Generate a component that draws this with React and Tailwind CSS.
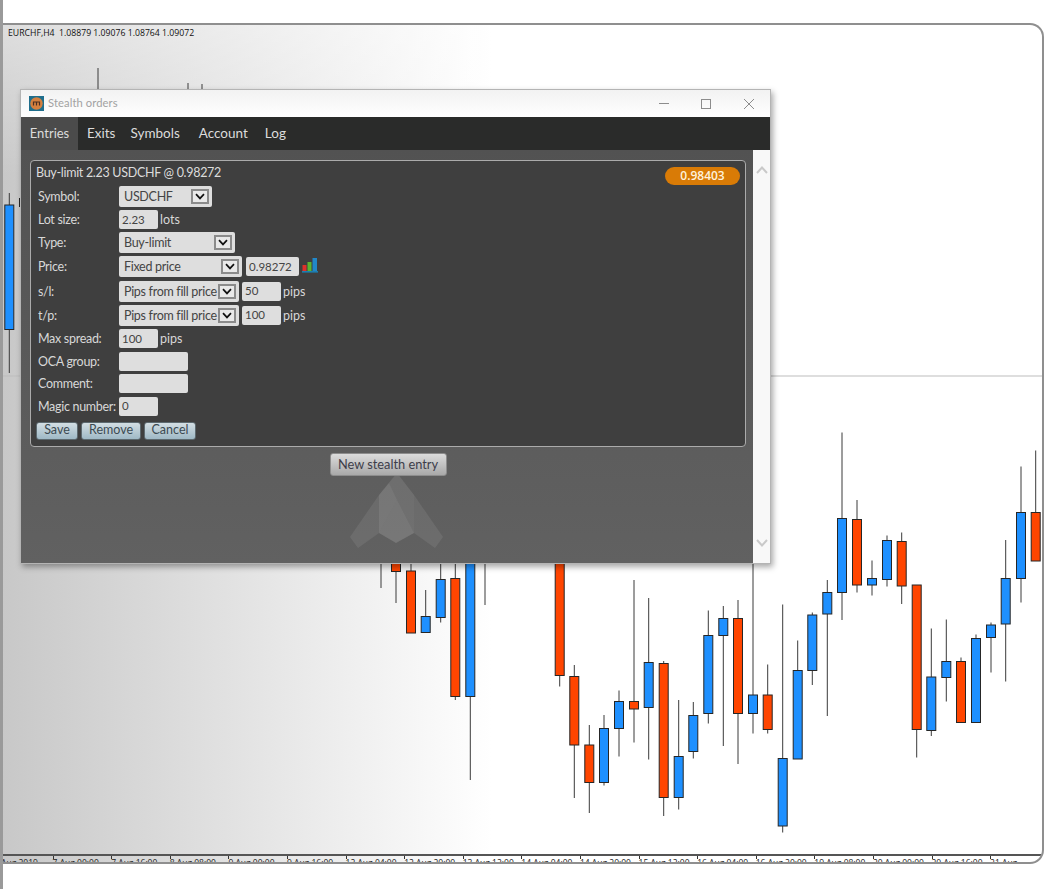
const CANDLES = [
  [396, 563, 603, 563, 571.5, "o"],
  [411, 563, 633, 571, 633, "o"],
  [425.7, 590, 633, 616.5, 632.5, "b"],
  [440.7, 563, 622.5, 579.5, 617.5, "b"],
  [455.3, 563, 700, 578.5, 696.5, "o"],
  [470.3, 563, 780, 563, 696.5, "b"],
  [559.7, 563, 686.5, 563, 675.5, "o"],
  [574.3, 665, 798, 676.5, 745, "o"],
  [589.3, 725, 813, 745, 782.5, "o"],
  [604, 715, 785.5, 728.5, 782.5, "b"],
  [619, 690.5, 756.5, 701.5, 728.5, "b"],
  [634, 580, 742.5, 701.5, 709, "o"],
  [648.7, 598, 759.5, 662.5, 707.5, "b"],
  [663.7, 661, 816, 663.5, 797.5, "o"],
  [678.7, 700, 809.5, 756.5, 797.5, "b"],
  [693.3, 702, 758.5, 715.5, 751.5, "b"],
  [708.3, 610.5, 723.5, 635.5, 713.5, "b"],
  [723.3, 606, 746, 618.5, 635.5, "b"],
  [738, 600, 764, 618.5, 713.5, "o"],
  [753, 563, 733.5, 695, 713.5, "b"],
  [767.7, 664.5, 733.5, 695, 729.5, "o"],
  [782.7, 604.5, 832.5, 758.5, 826, "b"],
  [797.7, 640.5, 759, 670.5, 759, "b"],
  [812.3, 612.5, 685, 615, 670.5, "b"],
  [827.3, 580, 716, 592.5, 614, "b"],
  [842, 432.5, 620, 518.5, 592.5, "b"],
  [857, 500, 592.5, 519.5, 585, "o"],
  [872, 560.5, 595.5, 578.5, 585, "b"],
  [887, 535.5, 586.5, 540.5, 579.5, "b"],
  [901.7, 532.5, 604, 541.5, 586, "o"],
  [916.7, 585, 757.5, 585, 729.5, "o"],
  [931.3, 628.5, 736, 677, 730.5, "b"],
  [946.3, 619.5, 701.5, 661.5, 677.5, "b"],
  [961, 657.5, 722.5, 661.5, 722.5, "o"],
  [976, 634.5, 722.5, 638.5, 722.5, "b"],
  [991, 622.5, 672.5, 625, 637.5, "b"],
  [1005.7, 540, 681.5, 578.5, 624, "b"],
  [1021, 466.5, 602.5, 512.5, 578.5, "b"],
  [1035.7, 450.5, 561, 512.5, 561, "o"],
  [9.3, 193, 373, 205, 329.5, "b"],
];

const WICKS = [
  [98, 68, 90],
  [188, 83, 90],
  [202, 84, 90],
  [381, 563, 588],
  [485, 563, 605],
];

const AXIS = [
  "6 Aug 2019", "7 Aug 00:00", "7 Aug 16:00", "8 Aug 08:00", "9 Aug 00:00", "9 Aug 16:00",
  "12 Aug 04:00", "12 Aug 20:00", "13 Aug 12:00", "14 Aug 04:00", "14 Aug 20:00",
  "15 Aug 12:00", "16 Aug 04:00", "16 Aug 20:00", "19 Aug 08:00", "20 Aug 00:00",
  "20 Aug 16:00", "21 Aug",
];

function Candles() {
  return (
    <svg className="absolute left-0 top-0 h-[830px] w-[1040px]" viewBox="3 25 1040 830">
      <line x1="3" y1="376" x2="1043" y2="376" stroke="#bdbdbd" strokeWidth="1" />
      {WICKS.map(([x, a, b]) => (
        <line key={x} x1={x} y1={a} x2={x} y2={b} stroke="#3a3a3a" strokeWidth="1" />
      ))}
      {CANDLES.map(([x, a, b, t, e, c]) => (
        <g key={x}>
          <line x1={x} y1={a} x2={x} y2={b} stroke="#3a3a3a" strokeWidth="1" />
          <rect
            x={x - 4.5}
            y={t}
            width="9"
            height={e - t}
            fill={c === "o" ? "#ff4500" : "#1e90ff"}
            stroke="#262626"
            strokeWidth="1"
          />
        </g>
      ))}
      <rect x="19.5" y="198.5" width="3" height="8" fill="#1e90ff" stroke="#262626" />
    </svg>
  );
}

function Chevron({ className = "" }) {
  return (
    <svg viewBox="0 0 10 7" className={"h-[7px] w-[10px] " + className}>
      <path d="M1 1.2 L5 5.4 L9 1.2" fill="none" stroke="#111" strokeWidth="1.7" />
    </svg>
  );
}

function Select({ w, children }) {
  return (
    <div className={`flex h-[21px] items-center justify-between rounded-[2px] bg-[#dedede] pl-[5px] pr-[3px] tracking-[-0.3px] text-[#444] ${w}`}>
      <span className="translate-y-px whitespace-nowrap">{children}</span>
      <span className="flex h-[15px] w-[18px] shrink-0 items-center justify-center border-2 border-[#8b8b8b] bg-[#e9e9e9]">
        <Chevron />
      </span>
    </div>
  );
}

function Input({ w, children }) {
  return (
    <div className={`flex h-[19px] items-center rounded-[2px] bg-[#dedede] pl-[3px] text-[11.5px] text-[#444] ${w}`}>
      {children}
    </div>
  );
}

function Row({ h, label, children }) {
  return (
    <div className={`flex items-center pl-[7px] ${h}`}>
      <span className="w-[81px] shrink-0 translate-y-px whitespace-nowrap tracking-[-0.3px] text-[#d8d8d8]">{label}</span>
      <div className="flex items-center">{children}</div>
    </div>
  );
}

function Btn({ w, children }) {
  return (
    <div className={`flex h-[18px] items-center justify-center rounded-[3px] border border-[#5d6a70] bg-gradient-to-b from-[#d3dee3] to-[#9fb9c6] text-[#3c4a52] ${w}`}>
      {children}
    </div>
  );
}

function BarsIcon() {
  return (
    <svg viewBox="0 0 16 16" className="ml-[3px] h-[16px] w-[16px] -translate-y-[2px]">
      <rect x="0.5" y="8" width="4" height="6" fill="#e0302a" />
      <rect x="5.5" y="5" width="4" height="9" fill="#5cb531" />
      <rect x="10.5" y="1" width="4.5" height="13" fill="#2188c9" />
      <rect x="0" y="14" width="16" height="1.6" fill="#1c7fb0" />
    </svg>
  );
}

function Logo() {
  return (
    <svg viewBox="340 465 110 90" className="h-[90px] w-[110px]">
      <polygon points="378,495 349,537 357,548 378,533" fill="#ffffff" fillOpacity="0.08" />
      <polygon points="413,495 442,537 434,548 413,533" fill="#ffffff" fillOpacity="0.08" />
      <polygon points="396,473 413,495 413,533 395,543 378,533 378,495" fill="#ffffff" fillOpacity="0.1" />
      <polygon points="378,495 388,483 396,500 378,533" fill="#ffffff" fillOpacity="0.06" />
      <polygon points="396,500 413,533 395,543 378,533" fill="#ffffff" fillOpacity="0.05" />
    </svg>
  );
}

function Dialog() {
  return (
    <div className="absolute left-[20px] top-[89px] flex h-[475px] w-[751px] flex-col border border-[#b4b4b4] bg-white font-['Lato','Open_Sans',sans-serif] text-[12.5px] shadow-[2px_3px_6px_rgba(0,0,0,0.35)]">
      <div className="flex h-[27px] shrink-0 items-center bg-gradient-to-b from-[#f2f2f2] to-white pl-[8px]">
        <svg viewBox="0 0 15 15" className="h-[15px] w-[15px]">
          <rect width="15" height="15" fill="#1f6e8c" />
          <circle cx="7.5" cy="7.5" r="6.2" fill="#d5803f" />
          <path d="M4.5 9.5 V6 H10.5 V9.5 M7.5 6 V9.5" fill="none" stroke="#4b2f22" strokeWidth="1.2" />
        </svg>
        <span className="ml-[4px] text-[11.2px] tracking-[0.1px] text-[#a2a2a2]">Stealth orders</span>
        <div className="ml-auto flex items-center pr-[16px]">
          <span className="h-px w-[10px] bg-[#8c8c8c]" />
          <span className="ml-[32px] h-[10px] w-[10px] border border-[#8c8c8c]" />
          <svg viewBox="0 0 10 10" className="ml-[33px] h-[10px] w-[10px]">
            <path d="M0 0 L10 10 M10 0 L0 10" stroke="#8c8c8c" strokeWidth="1" />
          </svg>
        </div>
      </div>
      <div className="flex h-[33px] shrink-0 items-center bg-[#2a2b2a] text-[13.5px] text-[#dcdcdc]">
        <div className="flex h-full w-[57px] items-center justify-center bg-[#4b4b4b] text-[13px]">Entries</div>
        <span className="ml-[9px]">Exits</span>
        <span className="ml-[15px]">Symbols</span>
        <span className="ml-[19px]">Account</span>
        <span className="ml-[17px]">Log</span>
      </div>
      <div className="flex min-h-0 flex-1">
        <div className="relative flex flex-1 flex-col items-stretch bg-gradient-to-b from-[#525252] to-[#616161] pl-[9px] pr-[7px] pt-[10px]">
          <div className="relative h-[287px] rounded-[4px] border border-[#ababab] bg-[#3f3f3f] pl-[5px]">
            <div className="h-[24px] pt-[4px] text-[12.5px] leading-[15px] tracking-[-0.3px] text-[#dcdcdc]">Buy-limit 2.23 USDCHF @ 0.98272</div>
            <div className="absolute right-[5px] top-[6px] flex h-[18px] w-[75px] items-center justify-center rounded-full bg-[#d97b06] font-['Open_Sans',sans-serif] text-[12px] font-semibold text-[#fff2dc]">0.98403</div>
            <div className="-ml-[5px]">
              <Row h="h-[23px]" label="Symbol:"><Select w="w-[93px]">USDCHF</Select></Row>
              <Row h="h-[23px]" label="Lot size:"><Input w="w-[39px]">2.23</Input><span className="ml-[2px] translate-y-px text-[#d8d8d8]">lots</span></Row>
              <Row h="h-[23px]" label="Type:"><Select w="w-[116px]">Buy-limit</Select></Row>
              <Row h="h-[25px]" label="Price:"><Select w="w-[123px]">Fixed price</Select><span className="ml-[4px]"><Input w="w-[53px]">0.98272</Input></span><BarsIcon /></Row>
              <Row h="h-[24px]" label="s/l:"><Select w="w-[120px]">Pips from fill price</Select><span className="ml-[3px]"><Input w="w-[39px]">50</Input></span><span className="ml-[2px] translate-y-px text-[#d8d8d8]">pips</span></Row>
              <Row h="h-[24px]" label="t/p:"><Select w="w-[120px]">Pips from fill price</Select><span className="ml-[3px]"><Input w="w-[39px]">100</Input></span><span className="ml-[2px] translate-y-px text-[#d8d8d8]">pips</span></Row>
              <Row h="h-[23px]" label="Max spread:"><Input w="w-[39px]">100</Input><span className="ml-[2px] translate-y-px text-[#d8d8d8]">pips</span></Row>
              <Row h="h-[22px]" label="OCA group:"><Input w="w-[69px]" /></Row>
              <Row h="h-[22px]" label="Comment:"><Input w="w-[69px]" /></Row>
              <Row h="h-[24px]" label="Magic number:"><Input w="w-[39px]">0</Input></Row>
              <div className="flex h-[25px] items-center gap-[3px] pl-[5px]">
                <Btn w="w-[42px]">Save</Btn>
                <Btn w="w-[60px]">Remove</Btn>
                <Btn w="w-[52px]">Cancel</Btn>
              </div>
            </div>
          </div>
          <div className="relative mt-[6px] flex flex-col items-center">
            <div className="absolute left-[calc(50%+8px)] top-[12px] -translate-x-1/2"><Logo /></div>
            <div className="relative flex h-[23px] w-[117px] items-center justify-center rounded-[3px] border border-[#8d8d8d] bg-gradient-to-b from-[#dcdcdc] to-[#a9a9a9] text-[12.8px] text-[#3d3d4a]">New stealth entry</div>
          </div>
        </div>
        <div className="flex w-[17px] shrink-0 flex-col items-center justify-between bg-[#f8f8f8] py-[16px]">
          <svg viewBox="0 0 12 8" className="h-[8px] w-[12px]"><path d="M1 7 L6 1.5 L11 7" fill="none" stroke="#c9c9c9" strokeWidth="2" /></svg>
          <svg viewBox="0 0 12 8" className="h-[8px] w-[12px]"><path d="M1 1 L6 6.5 L11 1" fill="none" stroke="#c9c9c9" strokeWidth="2" /></svg>
        </div>
      </div>
    </div>
  );
}

export default function App() {
  return (
    <div className="relative flex h-[889px] w-[1062px] overflow-hidden bg-white">
      <div className="h-full w-[3px] shrink-0 bg-[#9a9a9a]" />
      <div className="pt-[23px]">
        <div className="flex h-[841px] w-[1041px] flex-col overflow-hidden rounded-r-[14px] border-y-2 border-r-2 border-[#8f8f8f] bg-[linear-gradient(to_bottom,rgba(255,255,255,0.4)_0%,rgba(255,255,255,0)_18%),linear-gradient(to_right,#c8c8c8_0%,#ffffff_47%,#ffffff_100%)] font-['Open_Sans',sans-serif]">
          <div className="relative min-h-0 flex-1">
            <Candles />
            <div className="absolute left-[5px] top-[2px] whitespace-nowrap text-[8.7px] leading-[12px] text-[#111]">EURCHF,H4&nbsp; 1.08879 1.09076 1.08764 1.09072</div>
          </div>
          <div className="flex h-[8px] shrink-0 overflow-hidden border-t-2 border-[#555] text-[8.5px] leading-[14px] text-[#222]">
            {AXIS.map((t, i) => (
              <div key={t} className={`relative w-[58.6px] shrink-0 whitespace-nowrap ${i === 0 ? "-ml-[9px]" : ""}`}>
                <span className="absolute left-0 top-0 h-[3px] w-px bg-[#333]" />
                {t}
              </div>
            ))}
          </div>
        </div>
      </div>
      <Dialog />
    </div>
  );
}
